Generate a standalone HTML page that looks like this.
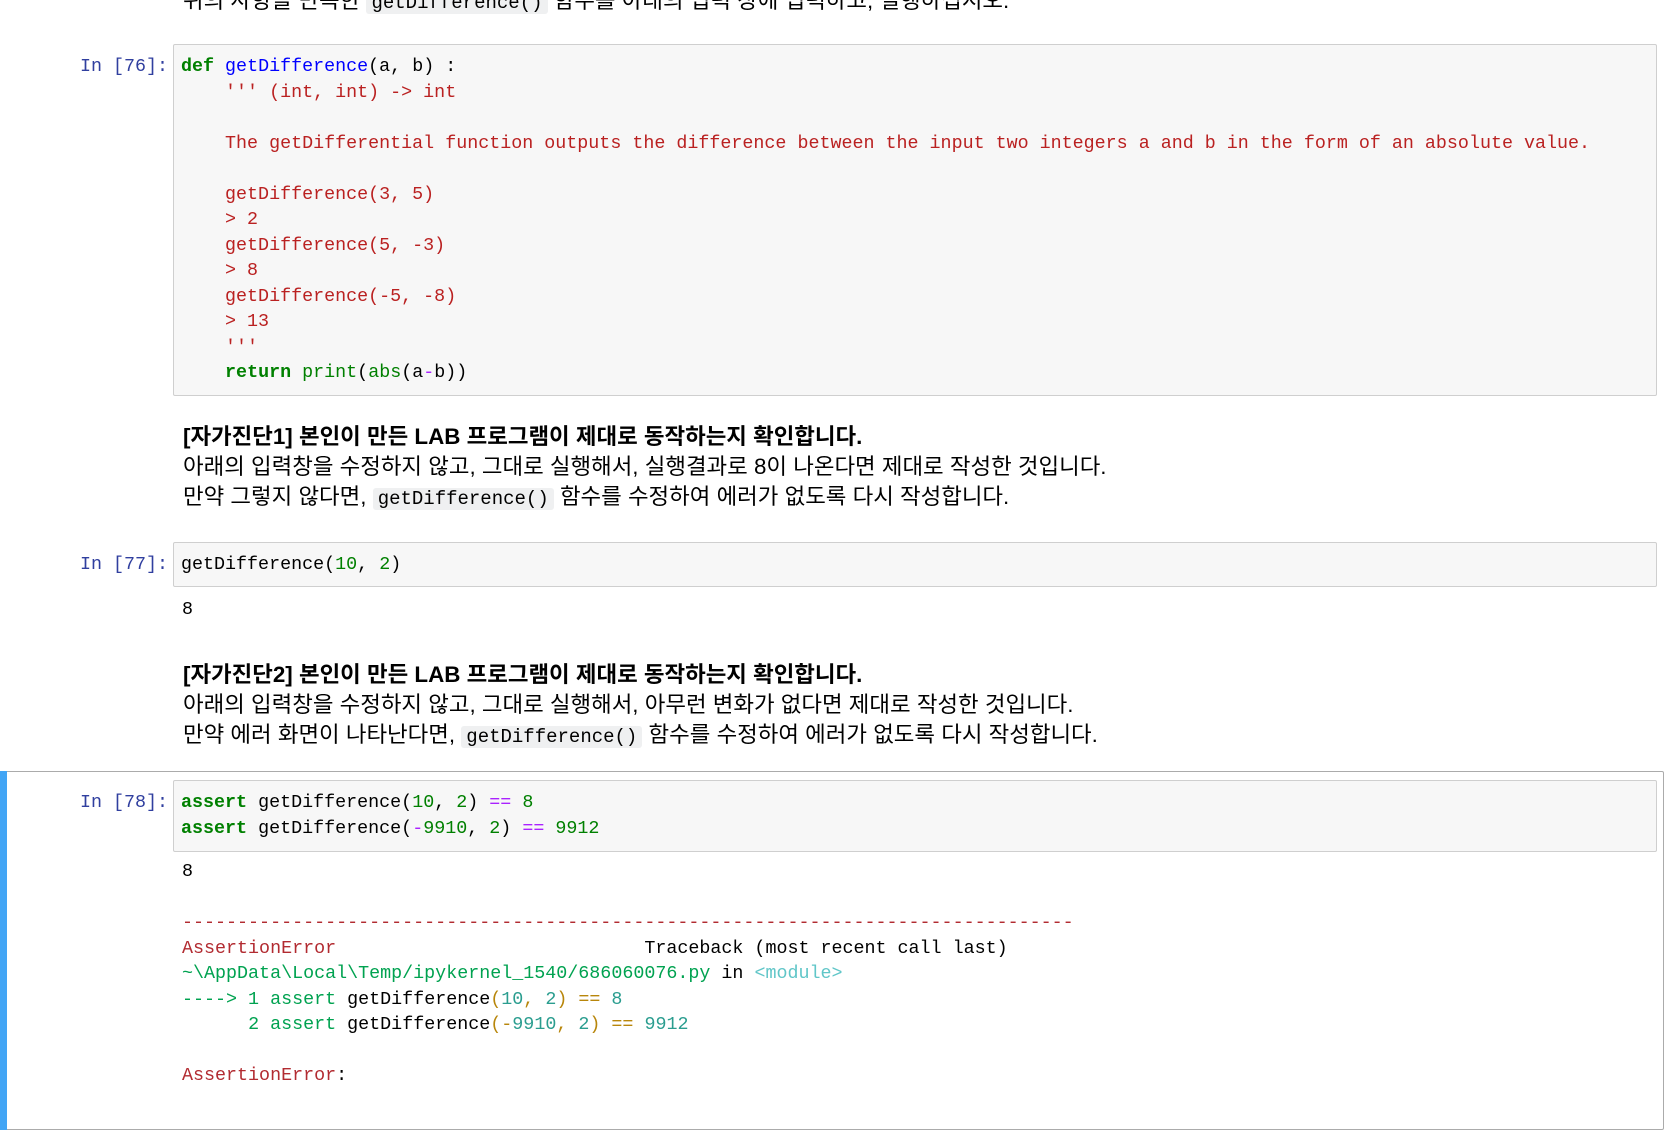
<!DOCTYPE html>
<html><head><meta charset="utf-8"><style>
body{margin:0;width:1667px;height:1135px;background:#fff;position:relative;overflow:hidden;font-family:"Liberation Sans","Noto Sans CJK KR",sans-serif;}
.a{position:absolute;white-space:pre;}
.m{font-family:"Liberation Mono","Noto Sans CJK KR",monospace;font-size:18.35px;line-height:25.5px;}
.t{font-size:22.4px;line-height:30px;color:#000;}
.box{position:absolute;background:#f7f7f7;border:1px solid #cfcfcf;border-radius:2px;}
.p{color:#303f9f;}
.k{color:#008000;font-weight:bold}
.f{color:#0000ff}
.s{color:#ba2121}
.n{color:#008000}
.o{color:#aa22ff}
.c{background:#eff0f1;padding:0 5px;border-radius:3px;font-family:"Liberation Mono",monospace;font-size:19px;}
.er{color:#b22b31}
.g{color:#00a250}
.cy{color:#60c6c8}
.tl{color:#2a9d8f}
.y{color:#b8860b}
</style></head><body>
<div class="a t" style="left:183px;top:-14px">위의 사항을 만족한 <span class="c">getDifference()</span> 함수를 아래의 입력 창에 입력하고, 실행하십시오.</div>

<div class="box" style="left:173px;top:44px;width:1482px;height:350px"></div>
<div class="a m p" style="left:80px;top:54px">In [76]:</div>
<div class="a m" style="left:181px;top:54px"><span class="k">def</span> <span class="f">getDifference</span>(a, b) :
<span class="s">    ''' (int, int) -> int

    The getDifferential function outputs the difference between the input two integers a and b in the form of an absolute value.

    getDifference(3, 5)
    > 2
    getDifference(5, -3)
    > 8
    getDifference(-5, -8)
    > 13
    '''</span>
    <span class="k">return</span> <span class="n">print</span>(<span class="n">abs</span>(a<span class="o">-</span>b))</div>

<div class="a t" style="left:183px;top:422px"><b>[자가진단1] 본인이 만든 LAB 프로그램이 제대로 동작하는지 확인합니다.</b>
아래의 입력창을 수정하지 않고, 그대로 실행해서, 실행결과로 8이 나온다면 제대로 작성한 것입니다.
만약 그렇지 않다면, <span class="c">getDifference()</span> 함수를 수정하여 에러가 없도록 다시 작성합니다.</div>

<div class="box" style="left:173px;top:542px;width:1482px;height:43px"></div>
<div class="a m p" style="left:80px;top:552px">In [77]:</div>
<div class="a m" style="left:181px;top:552px">getDifference(<span class="n">10</span>, <span class="n">2</span>)</div>
<div class="a m" style="left:182px;top:597px">8</div>

<div class="a t" style="left:183px;top:660px"><b>[자가진단2] 본인이 만든 LAB 프로그램이 제대로 동작하는지 확인합니다.</b>
아래의 입력창을 수정하지 않고, 그대로 실행해서, 아무런 변화가 없다면 제대로 작성한 것입니다.
만약 에러 화면이 나타난다면, <span class="c">getDifference()</span> 함수를 수정하여 에러가 없도록 다시 작성합니다.</div>

<div style="position:absolute;left:0;top:771px;width:1662px;height:357px;border:1px solid #ababab;border-radius:2px"></div>
<div style="position:absolute;left:0;top:771px;width:7px;height:359px;background:#42a5f5"></div>
<div class="box" style="left:173px;top:780px;width:1482px;height:70px"></div>
<div class="a m p" style="left:80px;top:790px">In [78]:</div>
<div class="a m" style="left:181px;top:790px"><span class="k">assert</span> getDifference(<span class="n">10</span>, <span class="n">2</span>) <span class="o">==</span> <span class="n">8</span>
<span class="k">assert</span> getDifference(<span class="o">-</span><span class="n">9910</span>, <span class="n">2</span>) <span class="o">==</span> <span class="n">9912</span></div>
<div class="a m" style="left:182px;top:859px">8

<span class="er">---------------------------------------------------------------------------------</span>
<span class="er">AssertionError</span>                            Traceback (most recent call last)
<span class="g">~\AppData\Local\Temp/ipykernel_1540/686060076.py</span> in <span class="cy">&lt;module&gt;</span>
<span class="g">----&gt; 1 assert</span> getDifference<span class="y">(</span><span class="tl">10</span><span class="y">,</span> <span class="tl">2</span><span class="y">)</span> <span class="y">==</span> <span class="tl">8</span>
      <span class="g">2 assert</span> getDifference<span class="y">(-</span><span class="tl">9910</span><span class="y">,</span> <span class="tl">2</span><span class="y">)</span> <span class="y">==</span> <span class="tl">9912</span>

<span class="er">AssertionError</span>: </div>
</body></html>
